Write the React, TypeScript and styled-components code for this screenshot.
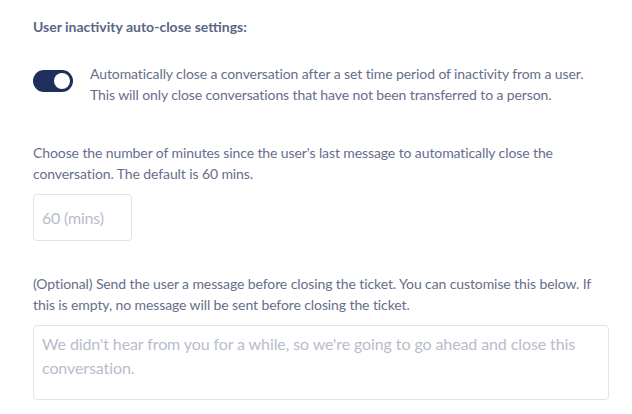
import React from "react";
import styled, { createGlobalStyle } from "styled-components";

const Global = createGlobalStyle`
  html, body { margin: 0; padding: 0; background: #ffffff; }
  body { font-family: Lato, "Open Sans", sans-serif; }
`;

const Page = styled.div`
  padding: 17px 24px 0 33px;
  display: flex;
  flex-direction: column;
  color: #666e8c;
  font-size: 14px;
`;

const Title = styled.h2`
  margin: 0;
  font-size: 14px;
  font-weight: 700;
  color: #5c6584;
  line-height: 20px;
`;

const ToggleRow = styled.div`
  display: flex;
  align-items: flex-start;
  gap: 17px;
  margin-top: 26px;
`;

const Toggle = styled.div<{ $on: boolean }>`
  flex: none;
  width: 40px;
  height: 22px;
  border-radius: 11px;
  background: ${(p) => (p.$on ? "#1e2f5d" : "#c9ccd8")};
  position: relative;
  margin-top: 7px;
  &::after {
    content: "";
    position: absolute;
    top: 3px;
    left: ${(p) => (p.$on ? "21px" : "3px")};
    width: 16px;
    height: 16px;
    border-radius: 50%;
    background: #ffffff;
  }
`;

const Text = styled.p<{ $gap?: number }>`
  margin: ${(p) => p.$gap ?? 0}px 0 0 0;
  line-height: 21px;
  font-size: 14px;
  letter-spacing: -0.1px;
  color: #666e8c;
`;

const NumberInput = styled.div`
  margin-top: 10px;
  width: 99px;
  height: 47px;
  box-sizing: border-box;
  border: 1px solid #e1e3ea;
  border-radius: 4px;
  display: flex;
  align-items: center;
  padding-left: 8px;
  color: #b8bccb;
  font-size: 16px;
  letter-spacing: -0.2px;
`;

const TextArea = styled.div`
  margin-top: 10px;
  width: 576px;
  height: 75px;
  box-sizing: border-box;
  border: 1px solid #e1e3ea;
  border-radius: 4px;
  padding: 6px 8px;
  color: #b8bccb;
  font-size: 16px;
  line-height: 24px;
  letter-spacing: -0.1px;
`;

export default function App() {
  return (
    <>
      <Global />
      <Page>
        <Title>User inactivity auto-close settings:</Title>
        <ToggleRow>
          <Toggle $on={true} />
          <Text>
            Automatically close a conversation after a set time period of inactivity from a user.
            <br />
            This will only close conversations that have not been transferred to a person.
          </Text>
        </ToggleRow>
        <Text $gap={37}>
          Choose the number of minutes since the user's last message to automatically close the
          conversation. The default is 60 mins.
        </Text>
        <NumberInput>60 (mins)</NumberInput>
        <Text $gap={32}>
          (Optional) Send the user a message before closing the ticket. You can customise this below. If
          this is empty, no message will be sent before closing the ticket.
        </Text>
        <TextArea>
          We didn't hear from you for a while, so we're going to go ahead and close this conversation.
        </TextArea>
      </Page>
    </>
  );
}
